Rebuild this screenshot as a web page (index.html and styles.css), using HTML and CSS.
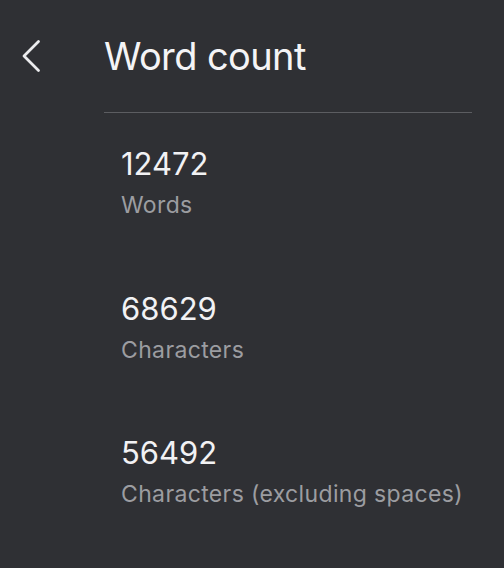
FILE: index.html
```html
<!DOCTYPE html>
<html>
<head>
<meta charset="utf-8">
<link rel="stylesheet" href="styles.css">
</head>
<body>
<div class="screen">
  <header class="header">
    <button class="back" aria-label="Back">
      <svg width="22" height="34" viewBox="0 0 22 34"><path d="M18.5 2.5 L4 17 L18.5 31.5" fill="none" stroke="#ececee" stroke-width="2.8" stroke-linecap="round" stroke-linejoin="round"/></svg>
    </button>
    <h1 class="title">Word count</h1>
  </header>
  <div class="content">
    <div class="divider"></div>
    <div class="stat">
      <div class="num">12472</div>
      <div class="label">Words</div>
    </div>
    <div class="stat">
      <div class="num">68629</div>
      <div class="label">Characters</div>
    </div>
    <div class="stat">
      <div class="num">56492</div>
      <div class="label">Characters (excluding spaces)</div>
    </div>
  </div>
</div>
</body>
</html>
```
FILE: styles.css
```css
html, body {
  margin: 0;
  padding: 0;
  background: #2f3034;
}
.screen {
  width: 504px;
  height: 568px;
  background: #2f3034;
  font-family: Inter, "Noto Sans", sans-serif;
  color: #f1f1f3;
  overflow: hidden;
}
.header {
  display: flex;
  height: 112px;
  box-sizing: border-box;
  padding: 0 0 0 20px;
}
.back {
  background: none;
  border: 0;
  padding: 0;
  width: 22px;
  height: 34px;
  display: flex;
  margin-top: 39px;
}
.back svg { display: block; }
.title {
  margin: 33px 0 0 62px;
  font-size: 38px;
  font-weight: 400;
  line-height: 46px;
  letter-spacing: -0.6px;
  color: #f4f4f6;
}
.content {
  padding-left: 104px;
  padding-right: 32px;
}
.divider {
  height: 1px;
  background: #5c5d61;
}
.stat {
  padding-left: 17px;
  height: 144.5px;
  box-sizing: border-box;
  padding-top: 33px;
}
.num {
  font-size: 31px;
  line-height: 36px;
  color: #f2f2f4;
}
.label {
  font-size: 23px;
  line-height: 28px;
  letter-spacing: 0.36px;
  color: #9c9da1;
  margin-top: 9px;
}
```
